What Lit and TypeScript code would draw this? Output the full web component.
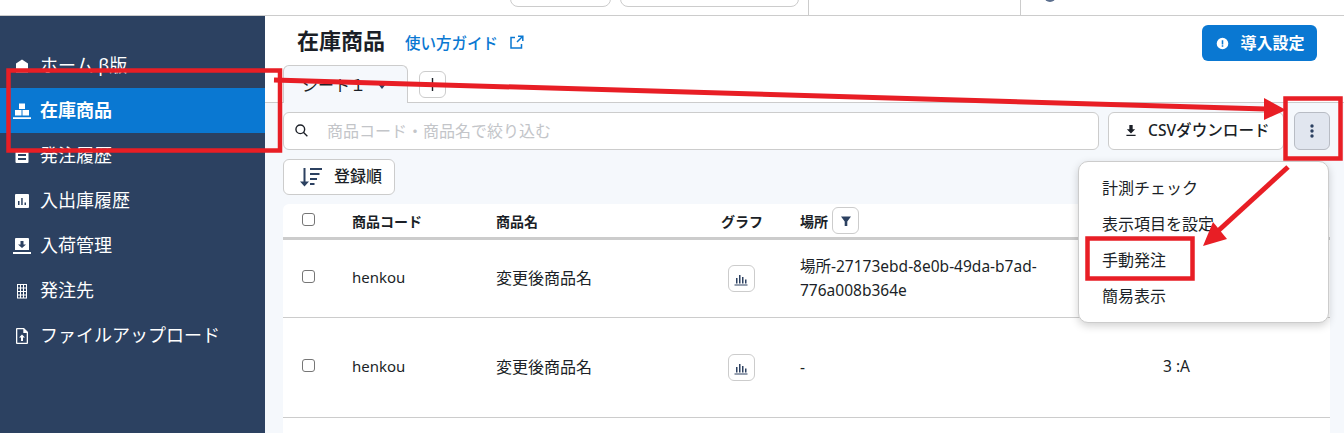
import { LitElement, css, html, svg } from 'lit';
import { customElement } from 'lit/decorators.js';

const navItems = [
  { label: 'ホーム β版', icon: svg`<path d="M9 2.500 3 6.500V15.500h12V6.500z"/>` },
  {
    label: '在庫商品',
    active: true,
    icon: svg`<path d="M6 1.500h6v5.500H6zM2 8h6.500v5.500H2zM9.500 8H16v5.500H9.500zM0 15.300h18V17H0z"/>`,
  },
  {
    label: '発注履歴',
    icon: svg`<path fill-rule="evenodd" d="M3.500 3h11a1 1 0 0 1 1 1v11a1 1 0 0 1-1 1h-11a1 1 0 0 1-1-1V4a1 1 0 0 1 1-1zm1.500 4v2h8V7zm0 4v2h8v-2z"/>`,
  },
  {
    label: '入出庫履歴',
    icon: svg`<path fill-rule="evenodd" d="M3 2h12a1 1 0 0 1 1 1v12a1 1 0 0 1-1 1H3a1 1 0 0 1-1-1V3a1 1 0 0 1 1-1zm2 7v4h1.500V9zm3.200-3v7h1.500V6zm3.300 4.500V13H13v-2.500z"/>`,
  },
  {
    label: '入荷管理',
    icon: svg`<path fill-rule="evenodd" d="M3 1h12a1 1 0 0 1 1 1v11H2V2a1 1 0 0 1 1-1zm4.500 3v3.500H5L9 11l4-3.500h-2.500V4zM0 15h18v2H0z"/>`,
  },
  {
    label: '発注先',
    icon: svg`<path fill-rule="evenodd" d="M4 2h10v14.500H4zM5 3v2.500h2V3zm3 0v2.500h2V3zm3 0v2.500h2V3zM5 6.500V9h2V6.500zm3 0V9h2V6.500zm3 0V9h2V6.500zM5 10v2.500h2V10zm3 0v2.500h2V10zm3 0v2.500h2V10zM5 13.500v2h2v-2zm3 0v2h2v-2zm3 0v2h2v-2z"/>`,
  },
  {
    label: 'ファイルアップロード',
    icon: svg`<path fill-rule="evenodd" d="M4 1h7l4 4v11a1 1 0 0 1-1 1H4a1 1 0 0 1-1-1V2a1 1 0 0 1 1-1zm.300 1.300v13.400h9.400V6H10.300V2.300zM9 7.500l3 3h-2V14H8v-3.500H6z"/>`,
  },
];

const rows = [
  { place: '場所-27173ebd-8e0b-49da-b7ad-776a008b364e', extra: '', tall: false },
  { place: '-', extra: '3 :A', tall: true },
];

const menuItems = ['計測チェック', '表示項目を設定', '手動発注', '簡易表示'];

@customElement('app-root')
export class AppRoot extends LitElement {
  static styles = css`
    :host {
      display: block;
      position: relative;
      width: 1344px;
      height: 433px;
      overflow: hidden;
      background: #f5f8fc;
      color: #1b1f27;
      font-family: 'Noto Sans', 'Noto Sans CJK JP', sans-serif;
      font-size: 16px;
    }
    button {
      font: inherit;
      color: inherit;
    }
    .topbar {
      height: 15px;
      display: flex;
      align-items: stretch;
      overflow: hidden;
      background: #fff;
      border-bottom: 1px solid #ccc;
    }
    .top-btn {
      height: 30px;
      margin-top: -23px;
      border: 1px solid #ccc;
      border-radius: 8px;
      box-sizing: border-box;
      background: #fff;
    }
    .top-btn.first {
      width: 101px;
      margin-left: 510px;
    }
    .top-btn.second {
      width: 179px;
      margin-left: 9px;
    }
    .top-cell {
      border-left: 1px solid #ccc;
      box-sizing: border-box;
    }
    .top-cell.store {
      width: 212px;
      margin-left: 9px;
    }
    .top-cell.user {
      flex: 1;
      padding-left: 23px;
    }
    .user-dot {
      display: block;
      width: 12px;
      height: 12px;
      margin-top: -10px;
      border-radius: 50%;
      background: #5b6f8e;
    }
    .layout {
      display: flex;
      height: 417px;
    }
    .sidebar {
      width: 265px;
      flex: none;
      box-sizing: border-box;
      padding-top: 27px;
      background: #2c4161;
      color: #fff;
    }
    .nav-item {
      height: 45px;
      display: flex;
      align-items: center;
      gap: 9px;
      padding-left: 13px;
      font-size: 18px;
      white-space: nowrap;
    }
    .nav-item svg {
      width: 18px;
      height: 18px;
      flex: none;
      fill: #fff;
    }
    .nav-label {
      padding-bottom: 4px;
    }
    .nav-item.active {
      background: #0a78d2;
      font-weight: 700;
    }
    .main {
      flex: 1;
      min-width: 0;
    }
    .head {
      background: #fff;
      height: 87px;
      box-sizing: border-box;
      border-bottom: 1px solid #ccc;
    }
    .title-row {
      height: 49px;
      display: flex;
      align-items: center;
      padding: 5px 27px 0 32px;
      box-sizing: border-box;
    }
    .title {
      font-size: 22px;
      font-weight: 700;
      line-height: 1;
      padding-bottom: 6px;
    }
    .guide {
      display: flex;
      align-items: center;
      gap: 11px;
      margin-left: 20px;
      padding-bottom: 2px;
      color: #0a78d2;
      font-weight: 500;
      font-size: 15.500px;
    }
    .guide svg {
      width: 15px;
      height: 15px;
      fill: none;
      stroke: #0a78d2;
      stroke-width: 1.500;
    }
    .setup {
      margin-left: auto;
      height: 36px;
      width: 115px;
      display: flex;
      align-items: center;
      justify-content: center;
      gap: 11px;
      padding: 0 0 0 2px;
      border: none;
      border-radius: 6px;
      background: #0a78d2;
      color: #fff;
      font-weight: 700;
    }
    .setup span {
      padding-bottom: 3px;
    }
    .setup svg {
      width: 13px;
      height: 13px;
      fill: #fff;
    }
    .tabs {
      display: flex;
      align-items: flex-start;
      padding-left: 18px;
    }
    .tab {
      width: 125px;
      height: 38px;
      box-sizing: border-box;
      display: flex;
      align-items: center;
      gap: 12px;
      padding: 0 0 2px 18px;
      border: 1px solid #ccc;
      border-bottom: none;
      border-radius: 6px 6px 0 0;
      background: #f5f8fc;
      margin-bottom: -1px;
    }
    .caret {
      width: 0;
      height: 0;
      margin-top: 6px;
      border-left: 4px solid transparent;
      border-right: 4px solid transparent;
      border-top: 5px solid #2c4161;
    }
    .add-tab {
      width: 27px;
      height: 27px;
      margin: 6px 0 0 11px;
      padding: 0;
      box-sizing: border-box;
      display: flex;
      align-items: center;
      justify-content: center;
      border: 1px solid #ccc;
      border-radius: 6px;
      background: #fff;
    }
    .add-tab svg {
      width: 13px;
      height: 13px;
      fill: #1b1f27;
    }
    .tools {
      display: flex;
      gap: 9px;
      padding: 9px 14px 0 18px;
    }
    .search {
      flex: 1;
      height: 38px;
      box-sizing: border-box;
      display: flex;
      align-items: center;
      gap: 19px;
      padding: 0 0 3px 11px;
      border: 1px solid #ccc;
      border-radius: 6px;
      background: #fff;
      color: #c3c5c9;
    }
    .search svg {
      width: 13px;
      height: 13px;
      flex: none;
      margin-top: 2px;
      fill: none;
      stroke: #1b1f27;
      stroke-width: 1.500;
    }
    .csv {
      width: 176px;
      height: 38px;
      display: flex;
      align-items: center;
      gap: 12px;
      box-sizing: border-box;
      border: 1px solid #ccc;
      border-radius: 6px;
      background: #fff;
      font-weight: 500;
      font-size: 15.600px;
      white-space: nowrap;
      padding: 0 0 4px 17px;
    }
    .csv svg {
      width: 10px;
      height: 11px;
      margin-top: 3px;
      fill: #1b1f27;
    }
    .kebab {
      width: 36px;
      height: 38px;
      margin-left: 1px;
      display: flex;
      align-items: center;
      justify-content: center;
      box-sizing: border-box;
      padding: 0;
      border: 1px solid #b8bcc4;
      border-radius: 6px;
      background: #e1e6ef;
    }
    .kebab svg {
      width: 4px;
      height: 14px;
      fill: #2c4161;
    }
    .sort-row {
      padding: 9px 0 9px 18px;
    }
    .sort {
      width: 112px;
      height: 36px;
      box-sizing: border-box;
      display: flex;
      align-items: center;
      gap: 12px;
      padding: 0 0 0 16px;
      border: 1px solid #ccc;
      border-radius: 6px;
      background: #fff;
      font-weight: 500;
    }
    .sort span {
      padding-bottom: 4px;
    }
    .sort svg {
      width: 22px;
      height: 20px;
      fill: #2c4161;
    }
    .table {
      margin: 0 14px 0 18px;
      background: #fff;
      border-radius: 6px 6px 0 0;
      min-height: 240px;
    }
    .row {
      display: grid;
      grid-template-columns: 69px 144px 210px 70px 363px 1fr;
      align-items: center;
      box-sizing: border-box;
      height: 78px;
      border-bottom: 1px solid #ccc;
    }
    .row.tall {
      height: 100px;
    }
    .row.header {
      height: 36px;
      border-bottom: 3px solid #ccc;
      font-size: 14px;
      font-weight: 700;
    }
    .check {
      display: block;
      width: 13px;
      height: 13px;
      margin: -4px 0 0 19px;
      box-sizing: border-box;
      border: 1px solid #767676;
      border-radius: 3px;
      background: #fff;
    }
    .header .check {
      margin-top: -2px;
    }
    .cell {
      padding-bottom: 4px;
    }
    .code {
      font-size: 15px;
    }
    .center {
      justify-self: center;
    }
    .graph-head {
      justify-self: center;
      padding-left: 2px;
    }
    .place {
      padding: 0 0 2px 24px;
      max-width: 290px;
      font-size: 15.500px;
      line-height: 24px;
    }
    .place-head {
      display: flex;
      align-items: center;
      gap: 4px;
      padding-left: 24px;
    }
    .extra {
      padding: 0 0 4px 24px;
      font-size: 15.500px;
    }
    .icon-btn {
      width: 27px;
      height: 27px;
      box-sizing: border-box;
      display: flex;
      align-items: center;
      justify-content: center;
      padding: 0;
      border: 1px solid #ccc;
      border-radius: 6px;
      background: #fff;
    }
    .icon-btn svg {
      width: 14px;
      height: 14px;
      fill: #2c4161;
    }
    .menu {
      position: absolute;
      left: 1078px;
      top: 161px;
      width: 251px;
      height: 162px;
      box-sizing: border-box;
      padding: 7px 0;
      background: #fff;
      border: 1px solid #ccc;
      border-radius: 10px;
      box-shadow: 0 3px 8px rgba(0, 0, 0, 0.18);
    }
    .menu-item {
      height: 36px;
      display: flex;
      align-items: center;
      padding-left: 23px;
    }
    .marks {
      position: absolute;
      inset: 0;
      width: 1344px;
      height: 433px;
      pointer-events: none;
    }
    .marks rect {
      fill: none;
      stroke: #e81e25;
      stroke-width: 4.500;
    }
    .marks line {
      stroke: #e81e25;
      stroke-width: 5;
    }
    .marks polygon {
      fill: #e81e25;
    }
  `;

  private check() {
    return html`<span class="check"></span>`;
  }

  private renderRow(row: (typeof rows)[number]) {
    return html`
      <div class="row ${row.tall ? 'tall' : ''}">
        ${this.check()}
        <div class="cell code">henkou</div>
        <div class="cell">変更後商品名</div>
        <button class="icon-btn center">
          <svg viewBox="0 0 14 14">
            <path d="M2 6h1.500v5.500H2zM5 3h1.500v8.500H5zM8 5h1.500v6.500H8zM11 7.500h1.500v4H11zM.5 12.500h13v1H.5z" />
          </svg>
        </button>
        <div class="place">${row.place}</div>
        <div class="extra">${row.extra}</div>
      </div>
    `;
  }

  render() {
    return html`
      <div class="topbar">
        <div class="top-btn first"></div>
        <div class="top-btn second"></div>
        <div class="top-cell store"></div>
        <div class="top-cell user"><span class="user-dot"></span></div>
      </div>
      <div class="layout">
        <nav class="sidebar">
          ${navItems.map(
            (item) => html`
              <div class="nav-item ${item.active ? 'active' : ''}">
                <svg viewBox="0 0 18 18">${item.icon}</svg>
                <span class="nav-label">${item.label}</span>
              </div>
            `,
          )}
        </nav>
        <div class="main">
          <div class="head">
            <div class="title-row">
              <div class="title">在庫商品</div>
              <div class="guide">
                使い方ガイド
                <svg viewBox="0 0 15 15">
                  <path d="M6 2.500H2v10.500h10.500V9M8 7l5.500-5.500M9 1.200h4.800V6" />
                </svg>
              </div>
              <button class="setup">
                <svg viewBox="0 0 15 15">
                  <path
                    fill-rule="evenodd"
                    d="M7.500.8a6.700 6.700 0 1 1 0 13.400 6.700 6.700 0 0 1 0-13.400zM6.600 3.800v4.800h1.800V3.800zm0 5.800v1.700h1.800V9.600z"
                  />
                </svg>
                <span>導入設定</span>
              </button>
            </div>
            <div class="tabs">
              <div class="tab">シート１ <span class="caret"></span></div>
              <button class="add-tab">
                <svg viewBox="0 0 13 13"><path d="M5.800 0h1.400v5.800H13v1.400H7.200V13H5.800V7.200H0V5.800h5.800z" /></svg>
              </button>
            </div>
          </div>
          <div class="tools">
            <div class="search">
              <svg viewBox="0 0 14 14"><circle cx="5.700" cy="5.700" r="4.700" /><path d="m9 9 4.300 4.300" /></svg>
              商品コード・商品名で絞り込む
            </div>
            <button class="csv">
              <svg viewBox="0 0 12 13"><path d="M4 0h4v5h3L6 10 1 5h3zM.5 11.500h11V13H.5z" /></svg>
              CSVダウンロード
            </button>
            <button class="kebab">
              <svg viewBox="0 0 4 14">
                <circle cx="2" cy="2" r="1.700" /><circle cx="2" cy="7" r="1.700" /><circle cx="2" cy="12" r="1.700" />
              </svg>
            </button>
          </div>
          <div class="sort-row">
            <button class="sort">
              <svg viewBox="0 0 22 20">
                <path
                  d="M3.500 1h2v13.500H9L4.500 19.500 0 14.500h3.500zM10 1h12v2H10zM10 6h9.500v2H10zM10 11h7v2h-7zM10 16h4.500v2H10z"
                />
              </svg>
              <span>登録順</span>
            </button>
          </div>
          <div class="table">
            <div class="row header">
              ${this.check()}
              <div>商品コード</div>
              <div>商品名</div>
              <div class="graph-head">グラフ</div>
              <div class="place-head">
                場所
                <button class="icon-btn">
                  <svg viewBox="0 0 14 14"><path d="M2 2.500h10L8.300 7.500V12H5.700V7.500z" /></svg>
                </button>
              </div>
              <div></div>
            </div>
            ${rows.map((row) => this.renderRow(row))}
          </div>
        </div>
      </div>
      <div class="menu">${menuItems.map((item) => html`<div class="menu-item">${item}</div>`)}</div>
      <svg class="marks" viewBox="0 0 1344 433">
        <rect x="8.500" y="70.500" width="271.500" height="80" />
        <rect x="1285.500" y="98.500" width="55" height="60" />
        <rect x="1087.500" y="238.500" width="105" height="40" />
        <line x1="274" y1="80" x2="1266" y2="109" />
        <polygon points="1264,98 1286,110 1264,120" />
        <line x1="1288" y1="167" x2="1218" y2="231" />
        <polygon points="1203,246 1213,222 1227,239" />
      </svg>
    `;
  }
}
